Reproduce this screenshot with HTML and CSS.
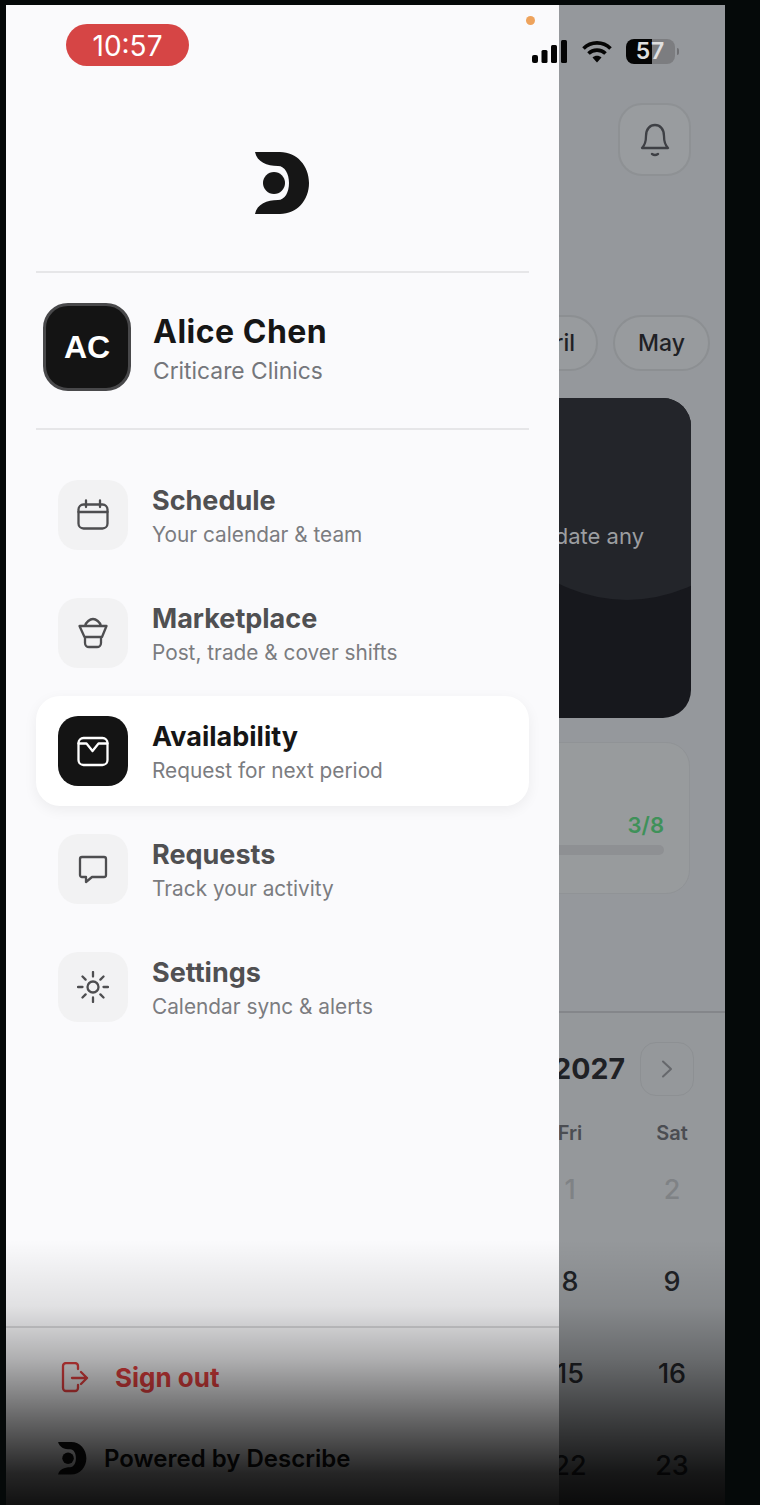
FILE: index.html
```html
<!DOCTYPE html>
<html>
  <head>
    <title>Availability menu</title>
    <link rel="stylesheet" href="styles.css">
  </head>
  <body>
    <svg class="defs" width="0" height="0">
      <symbol id="logo" viewBox="0 0 55 63">
        <path d="M0 0H25C42 0 54 14 54 31C54 48 42 62 25 62H0C2 52 12 48 23 48C30 48 34 40 34 31C34 22 30 14 23 14C12 14 2 10 0 0Z"/>
        <circle cx="19" cy="31" r="11"/>
      </symbol>
    </svg>

    <div class="screen">
      <aside class="drawer">
        <div class="drawer-main">
          <div class="brand">
            <svg class="brand-logo"><use href="#logo"/></svg>
          </div>
          <div class="profile">
            <div class="avatar">AC</div>
            <div class="profile-text">
              <div class="profile-name">Alice Chen</div>
              <div class="profile-org">Criticare Clinics</div>
            </div>
          </div>
          <nav class="menu">
            <a class="menu-item">
              <span class="tile">
                <svg viewBox="0 0 32 32"><rect x="1.5" y="5.5" width="29" height="24" rx="5"/><path d="M1.5 13H30.5M9 1.5V8M23 1.5V8"/></svg>
              </span>
              <span class="menu-text">
                <span class="menu-title">Schedule</span>
                <span class="menu-sub">Your calendar &amp; team</span>
              </span>
            </a>
            <a class="menu-item">
              <span class="tile">
                <svg viewBox="0 0 32 32"><path d="M2.5 9H29.5L25 20H7.5ZM8 20V26A4 4 0 0 0 12 30H20A4 4 0 0 0 24 26V20M8 9C9 5 13 2 16 2C19 2 23 5 24 9"/></svg>
              </span>
              <span class="menu-text">
                <span class="menu-title">Marketplace</span>
                <span class="menu-sub">Post, trade &amp; cover shifts</span>
              </span>
            </a>
            <a class="menu-item active">
              <span class="tile">
                <svg viewBox="0 0 32 32"><rect x="1.5" y="3" width="29" height="27" rx="5"/><path d="M1.5 8.5H9.5L15.5 16L21.5 8.5H30.5"/></svg>
              </span>
              <span class="menu-text">
                <span class="menu-title">Availability</span>
                <span class="menu-sub">Request for next period</span>
              </span>
            </a>
            <a class="menu-item">
              <span class="tile">
                <svg viewBox="0 0 32 32"><path d="M5 4H27A2 2 0 0 1 29 6V22A2 2 0 0 1 27 24H15L9 29V24H5A2 2 0 0 1 3 22V6A2 2 0 0 1 5 4Z"/></svg>
              </span>
              <span class="menu-text">
                <span class="menu-title">Requests</span>
                <span class="menu-sub">Track your activity</span>
              </span>
            </a>
            <a class="menu-item">
              <span class="tile">
                <svg viewBox="0 0 32 32"><circle cx="16" cy="16" r="5.5"/><path d="M16 1V5.5M16 26.5V31M1 16H5.5M26.5 16H31M5.5 5.5L8.6 8.6M23.4 23.4L26.5 26.5M5.5 26.5L8.6 23.4M23.4 8.6L26.5 5.5"/></svg>
              </span>
              <span class="menu-text">
                <span class="menu-title">Settings</span>
                <span class="menu-sub">Calendar sync &amp; alerts</span>
              </span>
            </a>
          </nav>
        </div>
        <div class="drawer-footer">
          <div class="signout">
            <svg viewBox="0 0 28 31"><path d="M17 7V4A3 3 0 0 0 14 1H5A3 3 0 0 0 2 4V26A3 3 0 0 0 5 29H14A3 3 0 0 0 17 26V23M11 16H26M20 10L26 16L20 22"/></svg>
            <span>Sign out</span>
          </div>
          <div class="powered">
            <svg class="powered-logo"><use href="#logo"/></svg>
            <span>Powered by Describe</span>
          </div>
        </div>
      </aside>

      <main class="backdrop">
        <div class="top">
          <button class="bell">
            <svg viewBox="0 0 32 34"><path d="M3 25C6 22 7 18 7 13C7 6 11 2 16 2C21 2 25 6 25 13C25 18 26 22 29 25ZM13 31Q16 33 19 31"/></svg>
          </button>
        </div>
        <div class="months">
          <span class="pill">April</span>
          <span class="pill">May</span>
        </div>
        <section class="hero">
          <p class="hero-text">You can update any</p>
        </section>
        <section class="progress">
          <div class="progress-count">3/8</div>
          <div class="progress-bar"></div>
        </section>
        <section class="calendar">
          <div class="cal-head">
            <span class="cal-title">January 2027</span>
            <button class="cal-next">
              <svg viewBox="0 0 12 18"><path d="M2 1.5L10 9L2 16.5"/></svg>
            </button>
          </div>
          <div class="cal-grid">
            <span class="cal-day">Fri</span><span class="cal-day">Sat</span>
            <span class="cal-num muted">1</span><span class="cal-num muted">2</span>
            <span class="cal-num">8</span><span class="cal-num">9</span>
            <span class="cal-num">15</span><span class="cal-num">16</span>
            <span class="cal-num">22</span><span class="cal-num">23</span>
          </div>
        </section>
      </main>

      <div class="fade"></div>

      <div class="statusbar">
        <span class="clock">10:57</span>
        <span class="mic-dot"></span>
        <div class="status-icons">
          <svg class="signal" viewBox="0 0 35 23"><rect x="0" y="15" width="6" height="8" rx="2"/><rect x="9.5" y="10" width="6" height="13" rx="1.5"/><rect x="19" y="5" width="6" height="18" rx="1.5"/><rect x="29" y="0" width="6" height="23" rx="1.5"/></svg>
          <svg class="wifi" viewBox="0 0 30 23"><path d="M1.5 8.5C9 1 21 1 28.5 8.5M6.5 13.5C11 9 19 9 23.5 13.5" fill="none" stroke="#050505" stroke-width="3.6"/><path d="M10.5 17.5C13 15 17 15 19.5 17.5L15 22.5Z"/></svg>
          <span class="battery">57</span>
          <span class="battery-cap"></span>
        </div>
      </div>
    </div>
  </body>
</html>
```

FILE: styles.css
```css
* {
  box-sizing: border-box;
}
html,
body {
  height: 100%;
}
body {
  margin: 0;
  padding: 5px 35px 0 6px;
  background-color: #050909;
  font-family: Inter, "Liberation Sans", sans-serif;
  overflow: hidden;
}
button {
  font: inherit;
  padding: 0;
}
.defs {
  position: absolute;
}
.screen {
  position: relative;
  display: flex;
  width: 719px;
  height: 1500px;
  overflow: hidden;
}

/* drawer */
.drawer {
  display: flex;
  flex-direction: column;
  flex: 0 0 553px;
  background-color: #fafafc;
}
.drawer-main {
  flex: 1;
  padding: 0 30px;
}
.brand {
  height: 268px;
  padding-top: 147px;
  border-bottom: 2px solid #e6e6e8;
  text-align: center;
}
.brand-logo {
  width: 55px;
  height: 63px;
  fill: #161616;
}
.profile {
  display: flex;
  align-items: center;
  gap: 22px;
  height: 157px;
  padding: 0 7px 8px;
  border-bottom: 2px solid #e6e6e8;
}
.avatar {
  display: flex;
  align-items: center;
  justify-content: center;
  width: 88px;
  height: 88px;
  padding-top: 2px;
  background-color: #141414;
  border: 3px solid #48484a;
  border-radius: 25px;
  color: #fff;
  font-family: "Liberation Sans", Arial, sans-serif;
  font-size: 32px;
  font-weight: 700;
}
.profile-text {
  padding-top: 5px;
}
.profile-name {
  color: #161616;
  font-size: 32px;
  font-weight: 700;
  letter-spacing: 0.5px;
  line-height: 40px;
}
.profile-org {
  margin-top: 3px;
  color: #74767b;
  font-size: 22.8px;
  line-height: 32px;
}
.menu {
  display: flex;
  flex-direction: column;
  gap: 8px;
  margin-top: 30px;
}
.menu-item {
  display: flex;
  align-items: center;
  gap: 24px;
  height: 110px;
  padding: 0 22px;
  border-radius: 24px;
}
.menu-item.active {
  background-color: #fff;
  box-shadow: 0 4px 14px rgba(0, 0, 0, 0.06);
}
.tile {
  display: flex;
  align-items: center;
  justify-content: center;
  width: 70px;
  height: 70px;
  background-color: #f2f2f3;
  border-radius: 20px;
}
.tile svg {
  width: 32px;
  height: 32px;
  fill: none;
  stroke: #4e4e50;
  stroke-width: 2.3;
  stroke-linecap: round;
  stroke-linejoin: round;
}
.active .tile {
  background-color: #141414;
}
.active .tile svg {
  stroke: #fff;
}
.menu-text {
  padding-top: 4px;
}
.menu-title {
  display: block;
  color: #505052;
  font-size: 27px;
  font-weight: 700;
  line-height: 34px;
}
.active .menu-title {
  color: #161616;
}
.menu-sub {
  display: block;
  margin-top: 2px;
  color: #7b7c80;
  font-size: 20.8px;
  line-height: 30px;
}
.drawer-footer {
  height: 179px;
  border-top: 2px solid #dcdcde;
}
.signout {
  display: flex;
  align-items: center;
  gap: 26px;
  height: 96px;
  padding: 2px 0 0 55px;
  color: #ea4242;
  font-size: 26px;
  font-weight: 700;
}
.signout svg {
  width: 28px;
  height: 31px;
  fill: none;
  stroke: #ea4242;
  stroke-width: 2.3;
  stroke-linecap: round;
  stroke-linejoin: round;
}
.powered {
  display: flex;
  align-items: center;
  gap: 17px;
  margin-top: 18px;
  padding-left: 52px;
  color: #111;
  font-size: 24px;
  font-weight: 600;
}
.powered-logo {
  width: 29px;
  height: 33px;
  fill: #111;
}

/* dimmed page behind the drawer */
.backdrop {
  flex: 1;
  min-width: 0;
  overflow: hidden;
  background-color: #95989c;
  color: #1f2125;
}
.top {
  display: flex;
  justify-content: flex-end;
  padding: 98px 34px 0 0;
}
.bell {
  display: flex;
  align-items: center;
  justify-content: center;
  width: 73px;
  height: 73px;
  background-color: #999c9f;
  border: 2px solid #8e9194;
  border-radius: 24px;
}
.bell svg {
  width: 32px;
  height: 34px;
  fill: none;
  stroke: #3e4045;
  stroke-width: 2.3;
  stroke-linecap: round;
  stroke-linejoin: round;
}
.months {
  display: flex;
  justify-content: flex-end;
  gap: 15px;
  margin-top: 139px;
  padding-right: 15px;
}
.pill {
  flex: none;
  width: 97px;
  height: 56px;
  border: 2px solid #8c8f92;
  border-radius: 28px;
  background-color: #989b9e;
  font-size: 23px;
  font-weight: 500;
  line-height: 52px;
  text-align: center;
}
.hero {
  position: relative;
  display: flex;
  justify-content: flex-end;
  height: 320px;
  margin: 27px 34px 0 -30px;
  padding: 124px 47px 0 0;
  overflow: hidden;
  background-color: #17181d;
  border-radius: 28px;
}
.hero::before {
  content: "";
  position: absolute;
  top: -98px;
  left: -52px;
  width: 300px;
  height: 300px;
  background-color: #23252a;
  border-radius: 50%;
}
.hero-text {
  position: relative;
  flex: none;
  margin: 0;
  color: #9c9ea1;
  font-size: 22px;
  line-height: 28px;
  white-space: nowrap;
}
.progress {
  height: 152px;
  margin: 24px 35px 0 -30px;
  padding: 68px 25px 0 0;
  background-color: #989b9d;
  border: 1px solid #909396;
  border-radius: 24px;
}
.progress-count {
  color: #3f9159;
  font-size: 22px;
  font-weight: 600;
  line-height: 28px;
  text-align: right;
}
.progress-bar {
  height: 10px;
  margin-top: 6px;
  background-color: #8e9093;
  border-radius: 5px;
}
.calendar {
  height: 500px;
  margin-top: 117px;
  background-color: #95989b;
  border-top: 2px solid #84868a;
}
.cal-head {
  display: flex;
  align-items: center;
  justify-content: flex-end;
  gap: 15px;
  height: 54px;
  margin-top: 29px;
  padding-right: 31px;
}
.cal-title {
  flex: none;
  margin-top: -2px;
  font-size: 28.5px;
  font-weight: 700;
  white-space: nowrap;
}
.cal-next {
  display: flex;
  align-items: center;
  justify-content: center;
  flex: none;
  width: 54px;
  height: 54px;
  background: transparent;
  border: 1px solid #8d9093;
  border-radius: 16px;
}
.cal-next svg {
  width: 12px;
  height: 18px;
  fill: none;
  stroke: #66686c;
  stroke-width: 2;
  stroke-linecap: round;
  stroke-linejoin: round;
}
.cal-grid {
  display: grid;
  grid-template-columns: 102px 102px;
  grid-template-rows: 48px;
  grid-auto-rows: 92px;
  justify-content: end;
  margin-top: 13px;
  padding-right: 2px;
  text-align: center;
}
.cal-day {
  color: #4b4d52;
  font-size: 20px;
  font-weight: 600;
  line-height: 48px;
}
.cal-num {
  color: #202226;
  font-size: 27px;
  font-weight: 500;
  line-height: 65px;
}
.cal-num.muted {
  color: #7f8285;
}

/* bottom fade, over drawer and page */
.fade {
  position: absolute;
  left: 0;
  right: 0;
  bottom: 0;
  height: 265px;
  background: linear-gradient(rgba(0, 0, 0, 0), rgba(0, 0, 0, 0.1) 25%, rgba(0, 0, 0, 0.3) 45%, rgba(0, 0, 0, 0.6) 68%, rgba(0, 0, 0, 0.85) 88%, rgba(0, 0, 0, 0.93));
  pointer-events: none;
}

/* status bar */
.statusbar {
  position: absolute;
  top: 0;
  left: 0;
  right: 0;
  height: 80px;
}
.clock {
  position: absolute;
  top: 19px;
  left: 60px;
  width: 123px;
  height: 42px;
  padding-top: 1px;
  background-color: #d64545;
  border-radius: 21px;
  color: #fff;
  font-size: 28px;
  line-height: 42px;
  text-align: center;
}
.mic-dot {
  position: absolute;
  top: 11px;
  left: 520px;
  width: 9px;
  height: 9px;
  background-color: #eea35c;
  border-radius: 50%;
}
.status-icons {
  position: absolute;
  top: 34px;
  left: 526px;
  display: flex;
  align-items: center;
  height: 25px;
}
.signal {
  width: 35px;
  height: 23px;
  fill: #050505;
}
.wifi {
  width: 30px;
  height: 23px;
  margin-left: 15px;
  fill: #050505;
}
.battery {
  width: 49px;
  height: 25px;
  background: linear-gradient(90deg, #050505 53%, #7c7d80 53%);
  margin-left: 14px;
  border-radius: 8px;
  color: #e0e0e0;
  font-size: 23px;
  font-weight: 600;
  letter-spacing: 1px;
  line-height: 25px;
  text-align: center;
}
.battery-cap {
  width: 2px;
  height: 7px;
  margin-left: 2px;
  background-color: #6f7073;
  border-radius: 0 2px 2px 0;
}
```
